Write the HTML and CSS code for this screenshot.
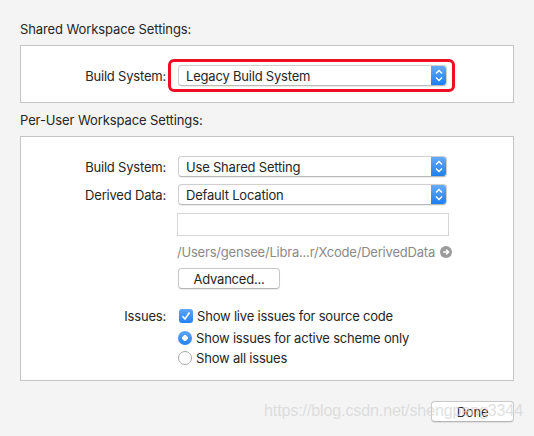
FILE: index.html
```html
<!DOCTYPE html>
<html>
<head>
<meta charset="utf-8">
<link rel="stylesheet" href="styles.css">
</head>
<body>
<div class="page">
  <div class="heading first">Shared Workspace Settings:</div>
  <div class="box box-shared">
    <div class="row">
      <div class="label label-tight">Build System:</div>
      <div class="highlight">
        <div class="popup">
          <span class="popup-text">Legacy Build System</span>
          <span class="popup-arrows"><svg width="16" height="21" viewBox="0 0 16 21"><path d="M5 8.5 L8 5.5 L11 8.5" fill="none" stroke="#fff" stroke-width="1.4"/><path d="M5 12.5 L8 15.5 L11 12.5" fill="none" stroke="#fff" stroke-width="1.4"/></svg></span>
        </div>
      </div>
    </div>
  </div>

  <div class="heading">Per-User Workspace Settings:</div>
  <div class="box box-user">
    <div class="row">
      <div class="label">Build System:</div>
      <div class="popup">
        <span class="popup-text">Use Shared Setting</span>
        <span class="popup-arrows"><svg width="16" height="21" viewBox="0 0 16 21"><path d="M5 8.5 L8 5.5 L11 8.5" fill="none" stroke="#fff" stroke-width="1.4"/><path d="M5 12.5 L8 15.5 L11 12.5" fill="none" stroke="#fff" stroke-width="1.4"/></svg></span>
      </div>
    </div>
    <div class="row r-derived">
      <div class="label">Derived Data:</div>
      <div class="popup">
        <span class="popup-text">Default Location</span>
        <span class="popup-arrows"><svg width="16" height="21" viewBox="0 0 16 21"><path d="M5 8.5 L8 5.5 L11 8.5" fill="none" stroke="#fff" stroke-width="1.4"/><path d="M5 12.5 L8 15.5 L11 12.5" fill="none" stroke="#fff" stroke-width="1.4"/></svg></span>
      </div>
    </div>
    <div class="row r-field">
      <div class="label"></div>
      <div class="field"></div>
    </div>
    <div class="row r-path">
      <div class="label"></div>
      <div class="path">/Users/gensee/Libra...r/Xcode/DerivedData</div>
      <svg class="path-icon" width="12" height="12" viewBox="0 0 12 12"><circle cx="6" cy="6" r="6" fill="#9b9b9b"/><path d="M3 6 H8.5 M6.2 3.6 L8.6 6 L6.2 8.4" fill="none" stroke="#fff" stroke-width="1.5"/></svg>
    </div>
    <div class="row r-adv">
      <div class="label"></div>
      <div class="button adv">Advanced...</div>
    </div>
    <div class="row r-issues">
      <div class="label">Issues:</div>
      <span class="checkbox"><svg width="14" height="14" viewBox="0 0 14 14"><path d="M3.5 7.2 L6 10 L10.5 3.5" fill="none" stroke="#fff" stroke-width="1.6"/></svg></span>
      <span class="opt">Show live issues for source code</span>
    </div>
    <div class="row r-radio1">
      <div class="label"></div>
      <span class="radio on"></span>
      <span class="opt">Show issues for active scheme only</span>
    </div>
    <div class="row r-radio2">
      <div class="label"></div>
      <span class="radio"></span>
      <span class="opt">Show all issues</span>
    </div>
  </div>

  <div class="footer">
    <div class="button done">Done</div>
  </div>
</div>
<div class="watermark">https://blog.csdn.net/shengpeng3344</div>
</body>
</html>
```
FILE: styles.css
```css
html, body {
  margin: 0;
  padding: 0;
}
body {
  background: #f4f4f4;
  font-family: Inter, "Liberation Sans", sans-serif;
  font-size: 13px;
  line-height: 16px;
  letter-spacing: -0.2px;
  color: #262626;
  width: 534px;
  height: 436px;
  overflow: hidden;
  position: relative;
}
.page {
  padding: 21px 20px 0 20px;
}
.heading {
  height: 16px;
  letter-spacing: -0.1px;
}
.box {
  background: #fff;
  border: 1px solid #c4c4c4;
  margin-top: 8px;
}
.box-shared {
  padding-top: 13px;
  height: 43px;
}
.box-shared + .heading {
  margin-top: 9px;
}
.box-user {
  margin-top: 8px;
  padding: 19px 0 14px 0;
}
.row {
  display: flex;
  align-items: center;
}
.label {
  width: 145px;
  flex: none;
  text-align: right;
  margin-right: 12px;
}
.label-tight {
  margin-right: 2px;
}
.highlight {
  border: 3px solid #ee0f24;
  border-radius: 6px;
  padding: 3px 5px 3px 7px;
}
.popup {
  width: 269px;
  height: 21px;
  box-sizing: border-box;
  border: 1px solid #cfcfcf;
  border-bottom-color: #b9b9b9;
  border-radius: 4px;
  background: #fff;
  display: flex;
  align-items: center;
  box-shadow: 0 0.5px 1px rgba(0,0,0,0.08);
  overflow: hidden;
}
.popup-text {
  flex: 1;
  padding-left: 7px;
}
.popup-arrows {
  width: 16px;
  height: 21px;
  margin: -1px -1px -1px 0;
  background: linear-gradient(#69acf8, #1b7cf0);
  border-radius: 0 4px 4px 0;
  display: flex;
}
.r-derived { margin-top: 7px; }
.r-field { margin-top: 8px; }
.field {
  width: 272px;
  height: 23px;
  box-sizing: border-box;
  margin-left: -1px;
  border: 1px solid #d6d6d6;
  background: #fff;
}
.r-path { margin-top: 8px; }
.path {
  color: #8a8a8a;
  margin-left: -1px;
}
.path-icon {
  margin-left: 5px;
}
.r-adv { margin-top: 8px; }
.button {
  height: 21px;
  box-sizing: border-box;
  border: 1px solid #c9c9c9;
  border-bottom-color: #b5b5b5;
  border-radius: 4px;
  background: #fff;
  display: flex;
  align-items: center;
  justify-content: center;
  box-shadow: 0 0.5px 1px rgba(0,0,0,0.08);
}
.adv {
  width: 102px;
}
.r-issues { margin-top: 19px; }
.r-radio1 { margin-top: 6px; }
.r-radio2 { margin-top: 4px; }
.checkbox {
  width: 14px;
  height: 14px;
  border-radius: 3px;
  background: linear-gradient(#5fa6f8, #2581f0);
  margin-left: 1px;
  display: flex;
  flex: none;
}
.radio {
  width: 14px;
  height: 14px;
  box-sizing: border-box;
  border-radius: 50%;
  border: 1px solid #a9a9a9;
  background: #fff;
  flex: none;
}
.radio.on {
  border: none;
  background: radial-gradient(circle, #fff 0 2.6px, transparent 3px), linear-gradient(#5fa6f8, #2581f0);
}
.opt {
  margin-left: 4px;
}
.footer {
  display: flex;
  justify-content: flex-end;
  margin-top: 20px;
}
.done {
  width: 83px;
}
.watermark {
  position: absolute;
  left: 264px;
  top: 402px;
  font-family: "Liberation Sans", sans-serif;
  font-size: 16px;
  line-height: 18px;
  color: rgba(210, 210, 210, 0.7);
  white-space: nowrap;
  letter-spacing: -0.1px;
}
```
